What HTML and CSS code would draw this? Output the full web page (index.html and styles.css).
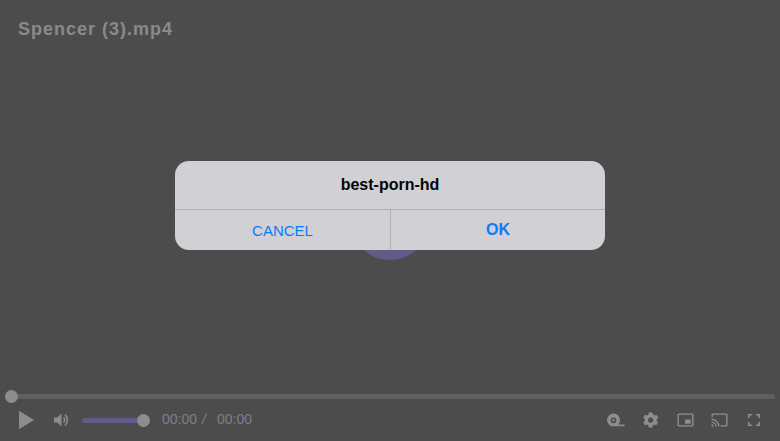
FILE: index.html
```html
<!DOCTYPE html>
<html lang="en">
<head>
<meta charset="utf-8">
<title>Spencer (3).mp4</title>
<link rel="stylesheet" href="styles.css">
</head>
<body>
<div class="player">
  <h1 class="title">Spencer (3).mp4</h1>
  <div class="big-play"></div>
  <div class="dialog">
    <div class="dialog-title">best-porn-hd</div>
    <div class="dialog-actions">
      <div class="btn btn-cancel">CANCEL</div>
      <div class="btn btn-ok">OK</div>
    </div>
  </div>
  <div class="controls">
    <div class="progress"><span class="progress-knob"></span></div>
    <div class="bar">
      <svg class="ic-play" width="15" height="20" viewBox="0 0 15 20"><path d="M0 .8L15 10 0 19.200z"/></svg>
      <svg class="ic-vol" width="18" height="18" viewBox="0 0 18 18"><path d="M1 6.500h3.200L8.500 2.500v13L4.200 11.500H1z"/><path class="line" d="M10.500 6.300a3.600 3.600 0 0 1 0 5.400M12 3.700a7 7 0 0 1 0 10.600"/></svg>
      <div class="volume"><span class="volume-knob"></span></div>
      <div class="time"><span>00:00</span><span class="sep">/</span><span>00:00</span></div>
      <div class="right">
        <svg width="20" height="16" viewBox="0 -1 20 16"><path fill-rule="evenodd" d="M8.500 .5a6.800 6.800 0 0 1 5 11h6v1.800H8.500a6.400 6.400 0 0 1-6.500-6.400A6.800 6.800 0 0 1 8.500 .5zm0 3.900a2.900 2.900 0 1 0 0 5.800 2.900 2.900 0 0 0 0-5.800zm0 1.700a1.200 1.200 0 1 1 0 2.400 1.200 1.200 0 0 1 0-2.400z"/></svg>
        <svg width="18" height="18" viewBox="0 0 24 24"><path fill-rule="evenodd" d="M19.400 13a7.500 7.500 0 0 0 0-2l2.100-1.600a.5.500 0 0 0 .1-.6l-2-3.500a.5.500 0 0 0-.6-.2l-2.500 1a7.300 7.300 0 0 0-1.700-1L14 2.400a.5.500 0 0 0-.5-.4h-4a.5.500 0 0 0-.5.400l-.4 2.700a7.300 7.300 0 0 0-1.700 1l-2.500-1a.5.500 0 0 0-.6.200l-2 3.500a.5.500 0 0 0 .1.600L4 11a7.500 7.500 0 0 0 0 2l-2.100 1.600a.5.500 0 0 0-.1.600l2 3.500a.5.500 0 0 0 .6.200l2.500-1a7.300 7.300 0 0 0 1.700 1l.4 2.700a.5.500 0 0 0 .5.400h4a.5.500 0 0 0 .5-.4l.4-2.700a7.300 7.300 0 0 0 1.700-1l2.500 1a.5.500 0 0 0 .6-.2l2-3.500a.5.500 0 0 0-.1-.6zM11.500 15.500a3.500 3.500 0 1 1 0-7 3.500 3.500 0 0 1 0 7z"/></svg>
        <svg width="17" height="16" viewBox="0 0 18 16"><path fill-rule="evenodd" d="M2 1h14a1.500 1.500 0 0 1 1.500 1.500v11A1.500 1.500 0 0 1 16 15H2a1.500 1.500 0 0 1-1.500-1.500v-11A1.500 1.500 0 0 1 2 1zm0 1.500v11h14v-11z"/><path d="M8.500 7.500h6v4.500h-6z"/></svg>
        <svg width="17" height="16" viewBox="0 0 18 16"><path d="M2 1h14a1.500 1.500 0 0 1 1.500 1.500v11A1.500 1.500 0 0 1 16 15h-6v-1.500h6v-11H2V5H.5V2.500A1.500 1.500 0 0 1 2 1z"/><path d="M.5 6.500a8.500 8.500 0 0 1 8.500 8.500H7.500a7 7 0 0 0-7-7zm0 3a5.500 5.500 0 0 1 5.500 5.500H4.500a4 4 0 0 0-4-4zm0 3A2.500 2.500 0 0 1 3 15H.5z"/></svg>
        <svg class="ic-full" width="14" height="14" viewBox="0 0 14 14"><path d="M1 1h4v1.600H2.600V5H1zm8 0h4v4h-1.600V2.600H9zM1 9h1.600v2.400H5V13H1zm10.400 0H13v4H9v-1.600h2.400z"/></svg>
      </div>
    </div>
  </div>
</div>
</body>
</html>
```
FILE: styles.css
```css
* { box-sizing: border-box; }
html, body { margin: 0; height: 100%; }
body { background: #4c4c4c; font-family: "Liberation Sans", Arial, sans-serif; overflow: hidden; }
.player { position: relative; width: 780px; height: 441px; display: flex; flex-direction: column; justify-content: space-between; }
.title { margin: 0; padding: 18px 18px 0; font-size: 18px; line-height: 22px; font-weight: 700; letter-spacing: 1px; color: #8a8a8a; }
.big-play { position: absolute; left: 350px; top: 180px; width: 80px; height: 80px; border-radius: 50%; background: #635b87; }
.dialog { position: absolute; left: 175px; top: 161px; width: 430px; height: 89px; border-radius: 14px; background: #d1d0d5; display: flex; flex-direction: column; overflow: hidden; }
.dialog-title { flex: none; height: 48px; padding-top: 15px; line-height: 18px; font-size: 16px; font-weight: 700; text-align: center; color: #030303; }
.dialog-actions { flex: none; height: 41px; display: flex; border-top: 1px solid #b1b0b4; }
.btn { color: #0a7aff; text-align: center; }
.btn-cancel { width: 216px; border-right: 1px solid #b1b0b4; font-size: 15px; line-height: 41px; }
.btn-ok { flex: 1; font-size: 16px; font-weight: 700; line-height: 39px; }
.controls { padding: 0 5px 0 4px; }
.progress { position: relative; height: 5px; margin-left: 4px; background: #5f5f5f; border-radius: 2px; }
.progress-knob { position: absolute; left: -3px; top: -4px; width: 13px; height: 13px; border-radius: 50%; background: #8d8d8d; }
.bar { height: 42px; display: flex; align-items: center; padding-left: 15px; }
.bar svg { fill: #8d8d8d; flex: none; display: block; }
.ic-vol { margin-left: 19px; }
.ic-vol .line { fill: none; stroke: #8d8d8d; stroke-width: 1.600; }
.volume { position: relative; width: 62px; height: 5px; margin-left: 11px; border-radius: 3px; background: #635b87; }
.volume-knob { position: absolute; right: -6px; top: -4px; width: 13px; height: 13px; border-radius: 50%; background: #8d8d8d; }
.time { margin-left: 18px; font-size: 14px; color: #7f7f88; display: flex; gap: 5px; margin-top: -2px; }
.sep { margin-right: 6px; font-style: italic; }
.right { margin-left: auto; display: flex; align-items: center; gap: 17px; padding-right: 14px; }
.ic-full { margin-left: 2px; }
```
